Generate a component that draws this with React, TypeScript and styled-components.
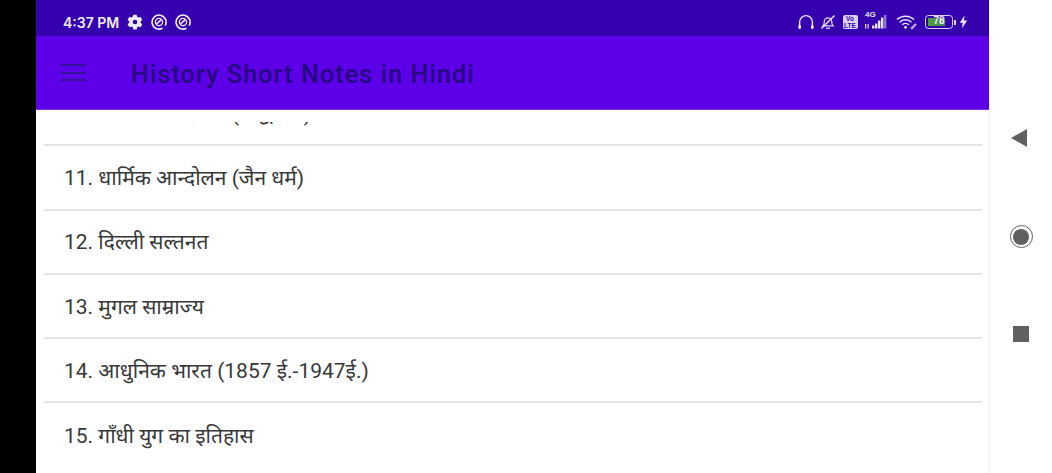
import React from 'react';
import styled, { createGlobalStyle } from 'styled-components';

const topics = [
  '10. धार्मिक आन्दोलन (बौद्ध धर्म)',
  '11. धार्मिक आन्दोलन (जैन धर्म)',
  '12. दिल्ली सल्तनत',
  '13. मुगल साम्राज्य',
  '14. आधुनिक भारत (1857 ई.-1947ई.)',
  '15. गाँधी युग का इतिहास',
];

const GearIcon = () => (
  <svg width="16" height="16" viewBox="0 0 24 24" fill="#f1ecfb">
    <path
      fillRule="evenodd"
      d="M9.5 1h5l.8 3.2 1.9 1.1 3.2-.9 2.5 4.300-2.400 2.300v2.100l2.400 2.300-2.500 4.300-3.200-.9-1.900 1.100-.8 3.200h-5l-.8-3.200-1.900-1.100-3.200.9L.9 15.400l2.400-2.300V11L.9 8.700l2.500-4.300 3.200.9 1.900-1.100zM12 8.500a3.500 3.500 0 1 0 0 7 3.500 3.500 0 0 0 0-7z"
    />
  </svg>
);

const CircleAppIcon = () => (
  <svg width="16" height="16" viewBox="0 0 16 16" fill="none" stroke="#f1ecfb">
    <path d="M11.500 14.200A7 7 0 1 1 14.200 11.500" strokeWidth="1.600" />
    <circle cx="8" cy="8" r="3.600" strokeWidth="1.300" />
    <path d="M5.400 9.800 10.200 5.800" strokeWidth="1.600" />
  </svg>
);

const HeadsetIcon = () => (
  <svg width="16" height="16" viewBox="0 0 16 16" fill="none" stroke="#ece6fa" strokeWidth="1.400">
    <path d="M1.600 12.500V8a6.400 6.400 0 0 1 12.800 0v4.500" />
    <rect x="0.400" y="11" width="2.600" height="4" rx="1.200" fill="#ece6fa" stroke="none" />
    <rect x="13" y="11" width="2.600" height="4" rx="1.200" fill="#ece6fa" stroke="none" />
  </svg>
);

const MutedBellIcon = () => (
  <svg width="16" height="16" viewBox="0 0 16 16" fill="none" stroke="#d9d0f2" strokeWidth="1.300">
    <path d="M3 11.800c1.200-1 1.300-2.500 1.300-4.300a3.700 3.700 0 0 1 7.400 0c0 1.800.1 3.300 1.300 4.300z" />
    <path d="M6 14.300h4" />
    <path d="M1.500 14.500 14.500 1.500" strokeWidth="1.500" stroke="#ece6fa" />
  </svg>
);

const SignalIcon = () => (
  <svg width="25" height="16" viewBox="0 0 25 16" fill="#e6e0f8">
    <rect x="8" y="11.500" width="2.400" height="3" />
    <rect x="11" y="9.500" width="2.400" height="5" />
    <rect x="14" y="6.500" width="2.400" height="8" />
    <rect x="17" y="3.500" width="2.400" height="11" />
    <rect x="20" y="1" width="2.400" height="13.500" fill="#8a72d8" />
    <rect x="1" y="10" width="1.200" height="4.500" />
    <rect x="3.500" y="10" width="1.200" height="4.500" />
  </svg>
);

const WifiIcon = () => (
  <svg width="22" height="16" viewBox="0 0 22 16" fill="none" stroke="#ece6fa" strokeWidth="1.500">
    <path d="M1 5.500a12.500 12.500 0 0 1 17 0" />
    <path d="M3.600 8.200a8.600 8.600 0 0 1 11.800 0" />
    <path d="M6.200 10.800a4.800 4.800 0 0 1 6.600 0" />
    <circle cx="9.500" cy="13.300" r="1.400" fill="#ece6fa" stroke="none" />
    <path d="M15.200 14.800 20 10" stroke="#b9a9ea" strokeWidth="2.400" />
  </svg>
);

const BoltIcon = () => (
  <svg width="9" height="14" viewBox="0 0 9 13" fill="#ece6fa">
    <path d="M5.500 0 .8 7.300h2.900L2.900 13l5.300-8H5z" />
  </svg>
);

const App = () => (
  <>
    <GlobalStyle />
    <Screen>
      <BlackEdge />
      <Phone>
        <StatusBar>
          <StatusLeft>
            <Clock>4:37 PM</Clock>
            <GearIcon />
            <CircleAppIcon />
            <CircleAppIcon />
          </StatusLeft>
          <StatusRight>
            <HeadsetIcon />
            <MutedBellIcon />
            <VoLte>
              Vo
              <br />
              LTE
            </VoLte>
            <SignalBox>
              <NetworkLabel>4G</NetworkLabel>
              <SignalIcon />
            </SignalBox>
            <WifiIcon />
            <BatteryBox>
              <Battery>
                <BatteryFill />
                <BatteryText>78</BatteryText>
              </Battery>
              <BatteryTip />
              <BoltIcon />
            </BatteryBox>
          </StatusRight>
        </StatusBar>
        <Toolbar>
          <MenuButton>
            <span />
            <span />
            <span />
          </MenuButton>
          <Title>History Short Notes in Hindi</Title>
        </Toolbar>
        <ListViewport>
          <List>
            {topics.map((topic) => (
              <Row key={topic}>{topic}</Row>
            ))}
          </List>
        </ListViewport>
      </Phone>
      <NavBar>
        <BackButton />
        <HomeButton>
          <span />
        </HomeButton>
        <RecentButton />
      </NavBar>
    </Screen>
  </>
);

const GlobalStyle = createGlobalStyle`
  html, body {
    margin: 0;
    padding: 0;
    background: #ffffff;
  }

  * {
    box-sizing: border-box;
  }
`;

const Screen = styled.div`
  display: flex;
  width: 1052px;
  height: 473px;
  overflow: hidden;
  font-family: Roboto, "Noto Sans", "Liberation Sans", sans-serif;
`;

const BlackEdge = styled.div`
  flex: 0 0 36px;
  background: #000000;
`;

const Phone = styled.div`
  display: flex;
  flex: 0 0 953px;
  flex-direction: column;
  background: #ffffff;
`;

const StatusBar = styled.div`
  display: flex;
  flex: 0 0 36px;
  align-items: center;
  justify-content: space-between;
  padding: 8px 21px 0 27px;
  background: #3500ad;
  color: #f1ecfb;
`;

const StatusLeft = styled.div`
  display: flex;
  align-items: center;
  gap: 8px;
`;

const Clock = styled.span`
  font-family: Inter, Roboto, sans-serif;
  font-size: 14px;
  font-weight: 600;
`;

const StatusRight = styled.div`
  display: flex;
  align-items: center;
  gap: 6.500px;
`;

const VoLte = styled.span`
  width: 15px;
  height: 14px;
  border-radius: 2px;
  background: #d9d0f2;
  color: #3700b3;
  font-family: "Liberation Sans", sans-serif;
  font-size: 6.500px;
  font-weight: 700;
  line-height: 7px;
  text-align: center;
`;

const SignalBox = styled.div`
  position: relative;
  display: flex;
`;

const NetworkLabel = styled.span`
  position: absolute;
  top: -4px;
  left: 1px;
  color: #e6e0f8;
  font-family: "Liberation Sans", sans-serif;
  font-size: 8px;
  font-weight: 700;
`;

const BatteryBox = styled.div`
  display: flex;
  align-items: center;
  margin-left: 1px;
`;

const Battery = styled.div`
  position: relative;
  width: 28px;
  height: 14px;
  padding: 2px;
  border: 1.500px solid #d9d0f2;
  border-radius: 3.500px;
`;

const BatteryFill = styled.div`
  width: 78%;
  height: 100%;
  background: linear-gradient(90deg, #4fa03c, #3f8a5a);
`;

const BatteryText = styled.span`
  position: absolute;
  top: -1px;
  left: 0;
  width: 100%;
  color: #f1ecfb;
  font-family: "Liberation Sans", sans-serif;
  font-size: 10px;
  font-weight: 700;
  text-align: center;
`;

const BatteryTip = styled.div`
  width: 2px;
  height: 5px;
  margin: 0 3px 0 1px;
  background: #d9d0f2;
`;

const Toolbar = styled.div`
  display: flex;
  flex: 0 0 74px;
  align-items: center;
  padding-left: 25px;
  border-bottom: 1px solid #8a2fe0;
  background: #5c00e8;
`;

const MenuButton = styled.div`
  display: flex;
  flex-direction: column;
  gap: 5.500px;
  width: 25px;

  span {
    height: 2px;
    background: #35109a;
  }
`;

const Title = styled.h1`
  margin: 4px 0 0 45px;
  color: #260a80;
  font-size: 25px;
  font-weight: 500;
  letter-spacing: 1.150px;
`;

const ListViewport = styled.div`
  position: relative;
  flex: 1;
  overflow: hidden;

  &::before {
    content: '';
    position: absolute;
    top: 0;
    left: 0;
    right: 0;
    height: 12px;
    background: #ffffff;
  }
`;

const List = styled.div`
  margin: -28px 7px 0 8px;
`;

const Row = styled.div`
  display: flex;
  align-items: center;
  height: 64.300px;
  padding: 5px 0 0 20px;
  border-bottom: 2px solid #e4e4e4;
  color: #383838;
  font-family: Roboto, "Noto Sans Devanagari", "Noto Sans", sans-serif;
  font-size: 21px;

  &:last-child {
    border-bottom: none;
  }
`;

const NavBar = styled.div`
  display: flex;
  flex: 1;
  flex-direction: column;
  align-items: center;
  padding: 129px 0 0 0;
  border-left: 1px solid #f1f1f1;
  background: #ffffff;
`;

const BackButton = styled.div`
  width: 0;
  height: 0;
  margin-left: -4px;
  border-top: 9px solid transparent;
  border-bottom: 9px solid transparent;
  border-right: 16px solid #606060;
`;

const HomeButton = styled.div`
  display: flex;
  align-items: center;
  justify-content: center;
  width: 23px;
  height: 23px;
  margin-top: 78px;
  border: 1.500px solid #606060;
  border-radius: 50%;

  span {
    width: 16px;
    height: 16px;
    border-radius: 50%;
    background: #606060;
  }
`;

const RecentButton = styled.div`
  width: 16px;
  height: 16px;
  margin-top: 78px;
  background: #606060;
`;

export default App;
